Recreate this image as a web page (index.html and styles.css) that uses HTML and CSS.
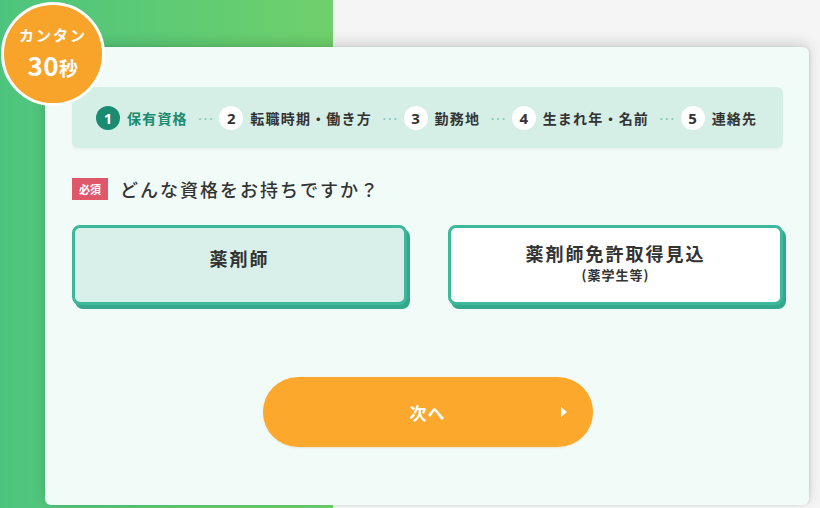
FILE: index.html
```html
<!DOCTYPE html>
<html lang="ja">
<head>
<meta charset="utf-8">
<title>保有資格</title>
<link rel="stylesheet" href="styles.css">
</head>
<body>
<div class="page">
  <div class="badge">
    <span class="badge-top">カンタン</span>
    <span class="badge-num">30<small>秒</small></span>
  </div>
  <main class="card">
    <ol class="steps">
      <li class="step active"><span class="num">1</span><span class="label">保有資格</span></li>
      <li class="dots">···</li>
      <li class="step"><span class="num">2</span><span class="label">転職時期・働き方</span></li>
      <li class="dots">···</li>
      <li class="step"><span class="num">3</span><span class="label">勤務地</span></li>
      <li class="dots">···</li>
      <li class="step"><span class="num">4</span><span class="label">生まれ年・名前</span></li>
      <li class="dots">···</li>
      <li class="step"><span class="num">5</span><span class="label">連絡先</span></li>
    </ol>
    <div class="question">
      <span class="req">必須</span>
      <span class="q-text">どんな資格をお持ちですか？</span>
    </div>
    <div class="options">
      <button class="option selected"><span class="opt-main single">薬剤師</span></button>
      <button class="option"><span class="opt-main">薬剤師免許取得見込</span><span class="opt-sub">(薬学生等)</span></button>
    </div>
    <div class="actions">
      <button class="next"><span>次へ</span><i class="arrow"></i></button>
    </div>
  </main>
</div>
</body>
</html>
```

FILE: styles.css
```css
* { box-sizing: border-box; }
html, body { margin: 0; padding: 0; }
body {
  width: 820px;
  height: 508px;
  overflow: hidden;
  font-family: "Noto Sans CJK JP", "Noto Sans", sans-serif;
  color: #333;
  background: linear-gradient(90deg, #4dc47e 0, #6fd16b 333px, #f5f5f5 333px, #f5f5f5 100%);
}
.page {
  position: relative;
  width: 820px;
  height: 508px;
  padding: 47px 0 0 45px;
}
.badge {
  position: absolute;
  left: 1px;
  top: 2px;
  width: 104px;
  height: 104px;
  border-radius: 50%;
  background: #f8a42b;
  border: 3px solid #fff;
  z-index: 2;
  display: flex;
  flex-direction: column;
  align-items: center;
  justify-content: center;
  color: #fff;
  font-weight: 700;
  padding-top: 2px;
}
.badge-top { font-size: 15px; line-height: 22px; letter-spacing: 2px; }
.badge-num { font-size: 26px; line-height: 38px; letter-spacing: 0.5px; }
.badge-num small { font-size: 19px; }
.card {
  width: 764px;
  height: 458px;
  background: #f1fbf8;
  border-radius: 6px;
  box-shadow: 0 -4px 14px rgba(0,0,0,0.14), 1px 0 3px rgba(0,0,0,0.1);
  padding: 40px 26px 0 27px;
}
.steps {
  list-style: none;
  margin: 0;
  height: 61px;
  background: #d5efe7;
  border-radius: 6px;
  padding: 0 0 0 24px;
  display: flex;
  align-items: center;
  box-shadow: 0 2px 3px rgba(0,0,0,0.04);
}
.step { display: flex; align-items: center; }
.num {
  width: 24px;
  height: 24px;
  border-radius: 50%;
  background: #fff;
  display: flex;
  align-items: center;
  justify-content: center;
  font-size: 15px;
  font-weight: 700;
  color: #333;
  margin-right: 7px;
  font-family: "Noto Sans", sans-serif;
}
.label {
  font-size: 14px;
  font-weight: 700;
  letter-spacing: 1.2px;
  color: #333;
}
.step.active .num { background: #1a8a70; color: #fff; }
.step.active .label { color: #1a8a70; }
.dots {
  color: #86cdb9;
  font-size: 11px;
  margin: 0 6px 0 9px;
  letter-spacing: -1px;
  font-weight: 700;
}
.question {
  display: flex;
  align-items: center;
  margin-top: 29px;
  height: 24px;
}
.req {
  width: 36px;
  height: 22px;
  background: #e0576a;
  color: #fff;
  font-size: 11px;
  font-weight: 700;
  display: flex;
  align-items: center;
  justify-content: center;
  margin-right: 12px;
}
.q-text {
  font-size: 18px;
  font-weight: 500;
  letter-spacing: 2px;
  color: #333;
}
.options {
  display: flex;
  gap: 41px;
  margin-top: 24px;
}
.option {
  width: 335px;
  height: 80px;
  border: 3px solid #3db89b;
  border-radius: 8px;
  background: #fff;
  box-shadow: 3px 4px 0 #35a88c;
  display: flex;
  flex-direction: column;
  align-items: center;
  justify-content: center;
  font-family: inherit;
  color: #333;
  padding: 0 0 4px;
}
.option.selected { background: #d8f0e9; }
.opt-main {
  font-size: 18px;
  font-weight: 700;
  letter-spacing: 2px;
  line-height: 24px;
}
.opt-main.single { margin-bottom: 10px; }
.opt-sub {
  font-size: 13px;
  font-weight: 700;
  letter-spacing: 1px;
  line-height: 20px;
}
.actions {
  display: flex;
  justify-content: center;
  margin-top: 72px;
}
.next {
  position: relative;
  width: 330px;
  height: 70px;
  border: none;
  border-radius: 35px;
  background: #fba82c;
  color: #fff;
  font-family: inherit;
  font-size: 17px;
  font-weight: 700;
  letter-spacing: 1px;
  display: flex;
  align-items: center;
  justify-content: center;
  box-shadow: 0 1px 2px rgba(200,120,0,0.15);
}
.arrow {
  position: absolute;
  right: 26px;
  top: 30px;
  width: 0;
  height: 0;
  border-left: 6px solid #fff;
  border-top: 5px solid transparent;
  border-bottom: 5px solid transparent;
}
```
